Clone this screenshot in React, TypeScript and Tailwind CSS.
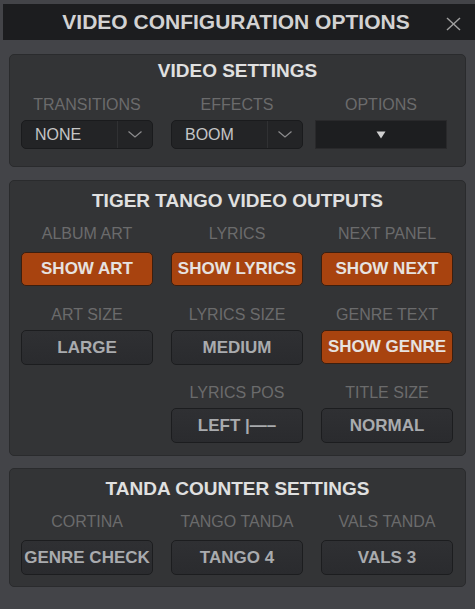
import React from "react";

const FONT = { fontFamily: '"Liberation Sans", Arial, sans-serif' };

function Label({ children }: { children: React.ReactNode }) {
  return (
    <div className="h-[20px] leading-[20px] text-[16px] text-center text-[#6b6b6c] whitespace-nowrap">
      {children}
    </div>
  );
}

function OrangeBtn({ children }: { children: React.ReactNode }) {
  return (
    <div className="h-[34px] rounded-[5px] border border-[#3a1f10] bg-[#a8430f] flex items-center justify-center text-[17px] font-bold text-[#e6e2e0] whitespace-nowrap">
      {children}
    </div>
  );
}

function DarkBtn({ children }: { children: React.ReactNode }) {
  return (
    <div className="h-[35px] rounded-[5px] border border-[#1c1d1f] bg-gradient-to-b from-[#2f3033] to-[#2a2b2e] flex items-center justify-center text-[17px] font-bold text-[#a9abae] whitespace-nowrap">
      {children}
    </div>
  );
}

function Chevron() {
  return (
    <svg width="14" height="7" viewBox="0 0 14 7">
      <polyline points="0.5,0.5 7,6 13.5,0.5" fill="none" stroke="#8c8c8e" strokeWidth="1.2" />
    </svg>
  );
}

function Select({ value }: { value: string }) {
  return (
    <div className="h-[29px] rounded-[5px] border border-[#1a1b1d] bg-[#232426] flex">
      <div className="flex-1 flex items-center pl-[13px] text-[16px] text-[#c6c6c6]">{value}</div>
      <div className="w-[35px] border-l border-[#303133] flex items-center justify-center">
        <Chevron />
      </div>
    </div>
  );
}

function Panel({ children, className }: { children: React.ReactNode; className: string }) {
  return (
    <div className={"mx-[9px] rounded-[5px] border border-[#2a2b2d] bg-[#333436] px-[11px] " + className}>
      {children}
    </div>
  );
}

function Title({ children }: { children: React.ReactNode }) {
  return (
    <div className="h-[22px] leading-[22px] text-center text-[19px] font-bold text-[#e0e0e0] whitespace-nowrap">
      {children}
    </div>
  );
}

export default function App() {
  return (
    <div className="w-[475px] h-[609px] bg-[#434448] pt-[4px] overflow-hidden" style={FONT}>
      <div className="ml-[3px] h-[36px] bg-[#1c1d1f] flex items-center relative">
        <div className="flex-1 text-center text-[21px] font-bold text-[#d2d2d2] pr-[6px]">
          VIDEO CONFIGURATION OPTIONS
        </div>
        <svg className="absolute left-[443px] top-[13px]" width="15" height="14" viewBox="0 0 15 14">
          <line x1="1" y1="1" x2="14" y2="13" stroke="#a0a0a0" strokeWidth="1.4" />
          <line x1="14" y1="1" x2="1" y2="13" stroke="#a0a0a0" strokeWidth="1.4" />
        </svg>
      </div>

      <Panel className="mt-[14px] pt-[5px] pb-[17px]">
        <Title>VIDEO SETTINGS</Title>
        <div className="mt-[13px] grid grid-cols-[132px_132px_132px] gap-x-[18px]">
          <div>
            <Label>TRANSITIONS</Label>
            <div className="mt-[5px]">
              <Select value="NONE" />
            </div>
          </div>
          <div>
            <Label>EFFECTS</Label>
            <div className="mt-[5px]">
              <Select value="BOOM" />
            </div>
          </div>
          <div className="-ml-[6px] w-[132px]">
            <Label>OPTIONS</Label>
            <div className="mt-[5px] h-[29px] border border-[#29292b] bg-[#1d1e20] flex items-center justify-center">
              <svg width="10" height="8" viewBox="0 0 10 8">
                <polygon points="0.5,0.5 9.5,0.5 5,7.5" fill="#cfcfcf" />
              </svg>
            </div>
          </div>
        </div>
      </Panel>

      <Panel className="mt-[13px] pt-[9px] pb-[12px]">
        <Title>TIGER TANGO VIDEO OUTPUTS</Title>
        <div className="mt-[12px] grid grid-cols-[132px_132px_132px] gap-x-[18px]">
          <div>
            <Label>ALBUM ART</Label>
            <div className="mt-[8px]"><OrangeBtn>SHOW ART</OrangeBtn></div>
          </div>
          <div>
            <Label>LYRICS</Label>
            <div className="mt-[8px]"><OrangeBtn>SHOW LYRICS</OrangeBtn></div>
          </div>
          <div>
            <Label>NEXT PANEL</Label>
            <div className="mt-[8px]"><OrangeBtn>SHOW NEXT</OrangeBtn></div>
          </div>
        </div>
        <div className="mt-[19px] grid grid-cols-[132px_132px_132px] gap-x-[18px]">
          <div>
            <Label>ART SIZE</Label>
            <div className="mt-[5px]"><DarkBtn>LARGE</DarkBtn></div>
          </div>
          <div>
            <Label>LYRICS SIZE</Label>
            <div className="mt-[5px]"><DarkBtn>MEDIUM</DarkBtn></div>
          </div>
          <div>
            <Label>GENRE TEXT</Label>
            <div className="mt-[5px]"><OrangeBtn>SHOW GENRE</OrangeBtn></div>
          </div>
        </div>
        <div className="mt-[18px] grid grid-cols-[132px_132px_132px] gap-x-[18px]">
          <div />
          <div>
            <Label>LYRICS POS</Label>
            <div className="mt-[5px]"><DarkBtn>LEFT |—–</DarkBtn></div>
          </div>
          <div>
            <Label>TITLE SIZE</Label>
            <div className="mt-[5px]"><DarkBtn>NORMAL</DarkBtn></div>
          </div>
        </div>
      </Panel>

      <Panel className="mt-[12px] pt-[9px] pb-[11px]">
        <Title>TANDA COUNTER SETTINGS</Title>
        <div className="mt-[12px] grid grid-cols-[132px_132px_132px] gap-x-[18px]">
          <div>
            <Label>CORTINA</Label>
            <div className="mt-[8px]"><DarkBtn>GENRE CHECK</DarkBtn></div>
          </div>
          <div>
            <Label>TANGO TANDA</Label>
            <div className="mt-[8px]"><DarkBtn>TANGO 4</DarkBtn></div>
          </div>
          <div>
            <Label>VALS TANDA</Label>
            <div className="mt-[8px]"><DarkBtn>VALS 3</DarkBtn></div>
          </div>
        </div>
      </Panel>
    </div>
  );
}
